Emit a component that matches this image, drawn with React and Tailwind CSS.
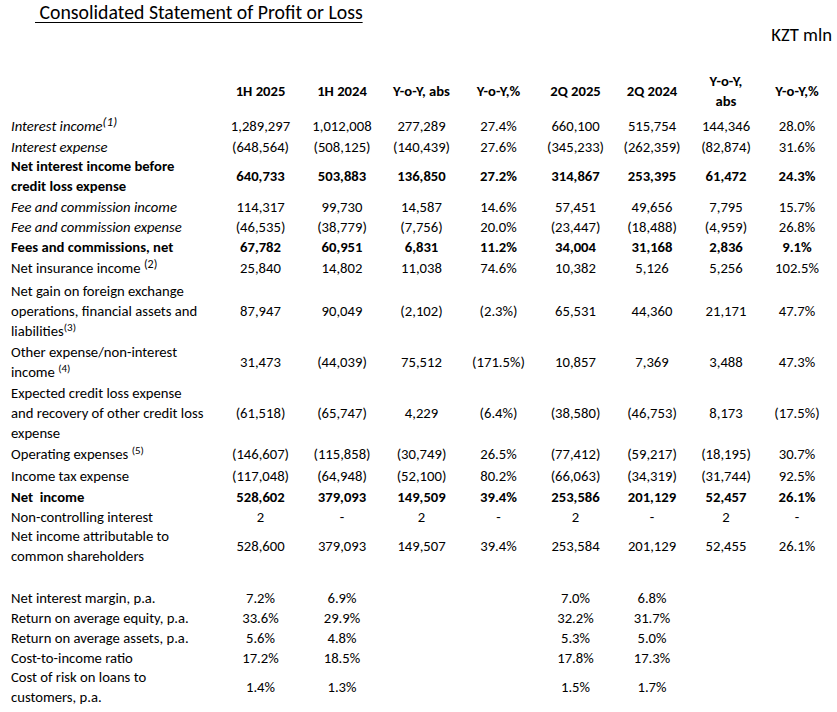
const cols = "grid grid-cols-[220px_81px_82px_77px_77px_77px_76px_72px_70px] items-center";

const rows = [
  { label: <>Interest income<sup className="text-[13px] relative -top-[5px]">(1)</sup></>, style: "italic", h: "h-[21px]", v: ["1,289,297", "1,012,008", "277,289", "27.4%", "660,100", "515,754", "144,346", "28.0%"] },
  { label: "Interest expense", style: "italic", h: "h-[20px]", v: ["(648,564)", "(508,125)", "(140,439)", "27.6%", "(345,233)", "(262,359)", "(82,874)", "31.6%"] },
  { label: <>Net interest income before<br />credit loss expense</>, style: "font-bold", h: "h-[40px]", v: ["640,733", "503,883", "136,850", "27.2%", "314,867", "253,395", "61,472", "24.3%"] },
  { label: "Fee and commission income", style: "italic", h: "h-[20px]", v: ["114,317", "99,730", "14,587", "14.6%", "57,451", "49,656", "7,795", "15.7%"] },
  { label: "Fee and commission expense", style: "italic", h: "h-[20px]", v: ["(46,535)", "(38,779)", "(7,756)", "20.0%", "(23,447)", "(18,488)", "(4,959)", "26.8%"] },
  { label: "Fees and commissions, net", style: "font-bold", h: "h-[20px]", v: ["67,782", "60,951", "6,831", "11.2%", "34,004", "31,168", "2,836", "9.1%"] },
  { label: <>Net insurance income <sup className="text-[12px] relative -top-[5px]">(2)</sup></>, h: "h-[24px]", v: ["25,840", "14,802", "11,038", "74.6%", "10,382", "5,126", "5,256", "102.5%"] },
  { label: <>Net gain on foreign exchange<br />operations, financial assets and<br />liabilities<sup className="text-[11px] relative -top-[5px]">(3)</sup></>, h: "h-[61px]", v: ["87,947", "90,049", "(2,102)", "(2.3%)", "65,531", "44,360", "21,171", "47.7%"] },
  { label: <>Other expense/non-interest<br />income <sup className="text-[11px] relative -top-[5px]">(4)</sup></>, h: "h-[41px]", v: ["31,473", "(44,039)", "75,512", "(171.5%)", "10,857", "7,369", "3,488", "47.3%"] },
  { label: <>Expected credit loss expense<br />and recovery of other credit loss<br />expense</>, h: "h-[61px]", v: ["(61,518)", "(65,747)", "4,229", "(6.4%)", "(38,580)", "(46,753)", "8,173", "(17.5%)"] },
  { label: <>Operating expenses <sup className="text-[11px] relative -top-[5px]">(5)</sup></>, h: "h-[22px]", v: ["(146,607)", "(115,858)", "(30,749)", "26.5%", "(77,412)", "(59,217)", "(18,195)", "30.7%"] },
  { label: "Income tax expense", h: "h-[21px]", v: ["(117,048)", "(64,948)", "(52,100)", "80.2%", "(66,063)", "(34,319)", "(31,744)", "92.5%"] },
  { label: "Net  income", style: "font-bold whitespace-pre", h: "h-[20px]", v: ["528,602", "379,093", "149,509", "39.4%", "253,586", "201,129", "52,457", "26.1%"] },
  { label: "Non-controlling interest", h: "h-[20px]", v: ["2", "-", "2", "-", "2", "-", "2", "-"] },
  { label: <>Net income attributable to<br />common shareholders</>, style: "font-[500]", h: "h-[40px]", v: ["528,600", "379,093", "149,507", "39.4%", "253,584", "201,129", "52,455", "26.1%"] },
];

const ratios = [
  { label: "Net interest margin, p.a.", h: "h-[20px]", v: ["7.2%", "6.9%", "", "", "7.0%", "6.8%", "", ""] },
  { label: "Return on average equity, p.a.", h: "h-[20px]", v: ["33.6%", "29.9%", "", "", "32.2%", "31.7%", "", ""] },
  { label: "Return on average assets, p.a.", h: "h-[20px]", v: ["5.6%", "4.8%", "", "", "5.3%", "5.0%", "", ""] },
  { label: "Cost-to-income ratio", h: "h-[20px]", v: ["17.2%", "18.5%", "", "", "17.8%", "17.3%", "", ""] },
  { label: <>Cost of risk on loans to<br />customers, p.a.</>, h: "h-[40px]", v: ["1.4%", "1.3%", "", "", "1.5%", "1.7%", "", ""] },
];

const Row = ({ row }) => (
  <div className={cols + " " + row.h}>
    <div className={"pl-[11px] leading-[20px] " + (row.style || "")}>{row.label}</div>
    {row.v.map((x, i) => (
      <div key={i} className={"text-center " + (row.style && row.style.includes("font-bold") ? "font-bold" : row.style === "font-[500]" ? "font-[500]" : "")}>
        {x}
      </div>
    ))}
  </div>
);

export default function App() {
  return (
    <div className="w-[837px] h-[712px] bg-white text-black text-[14.67px] overflow-hidden font-['Carlito','Calibri','Lato',sans-serif]">
      <div className="h-[24px] pl-[35px] text-[19.8px] leading-[24px]">
        <span className="underline underline-offset-[3px] whitespace-pre"> Consolidated Statement of Profit or Loss</span>
      </div>
      <div className="h-[22px] text-right pr-[5px] text-[18.67px] leading-[22px]">KZT mln</div>
      <div className={cols + " h-[42px] mt-[24px] font-bold leading-[20px]"}>
        <div />
        <div className="text-center">1H 2025</div>
        <div className="text-center">1H 2024</div>
        <div className="text-center">Y-o-Y, abs</div>
        <div className="text-center">Y-o-Y,%</div>
        <div className="text-center">2Q 2025</div>
        <div className="text-center">2Q 2024</div>
        <div className="text-center">Y-o-Y,<br />abs</div>
        <div className="text-center">Y-o-Y,%</div>
      </div>
      <div className="mt-[3px]">
        {rows.map((r, i) => <Row key={i} row={r} />)}
      </div>
      <div className="mt-[21px]">
        {ratios.map((r, i) => <Row key={i} row={r} />)}
      </div>
    </div>
  );
}
